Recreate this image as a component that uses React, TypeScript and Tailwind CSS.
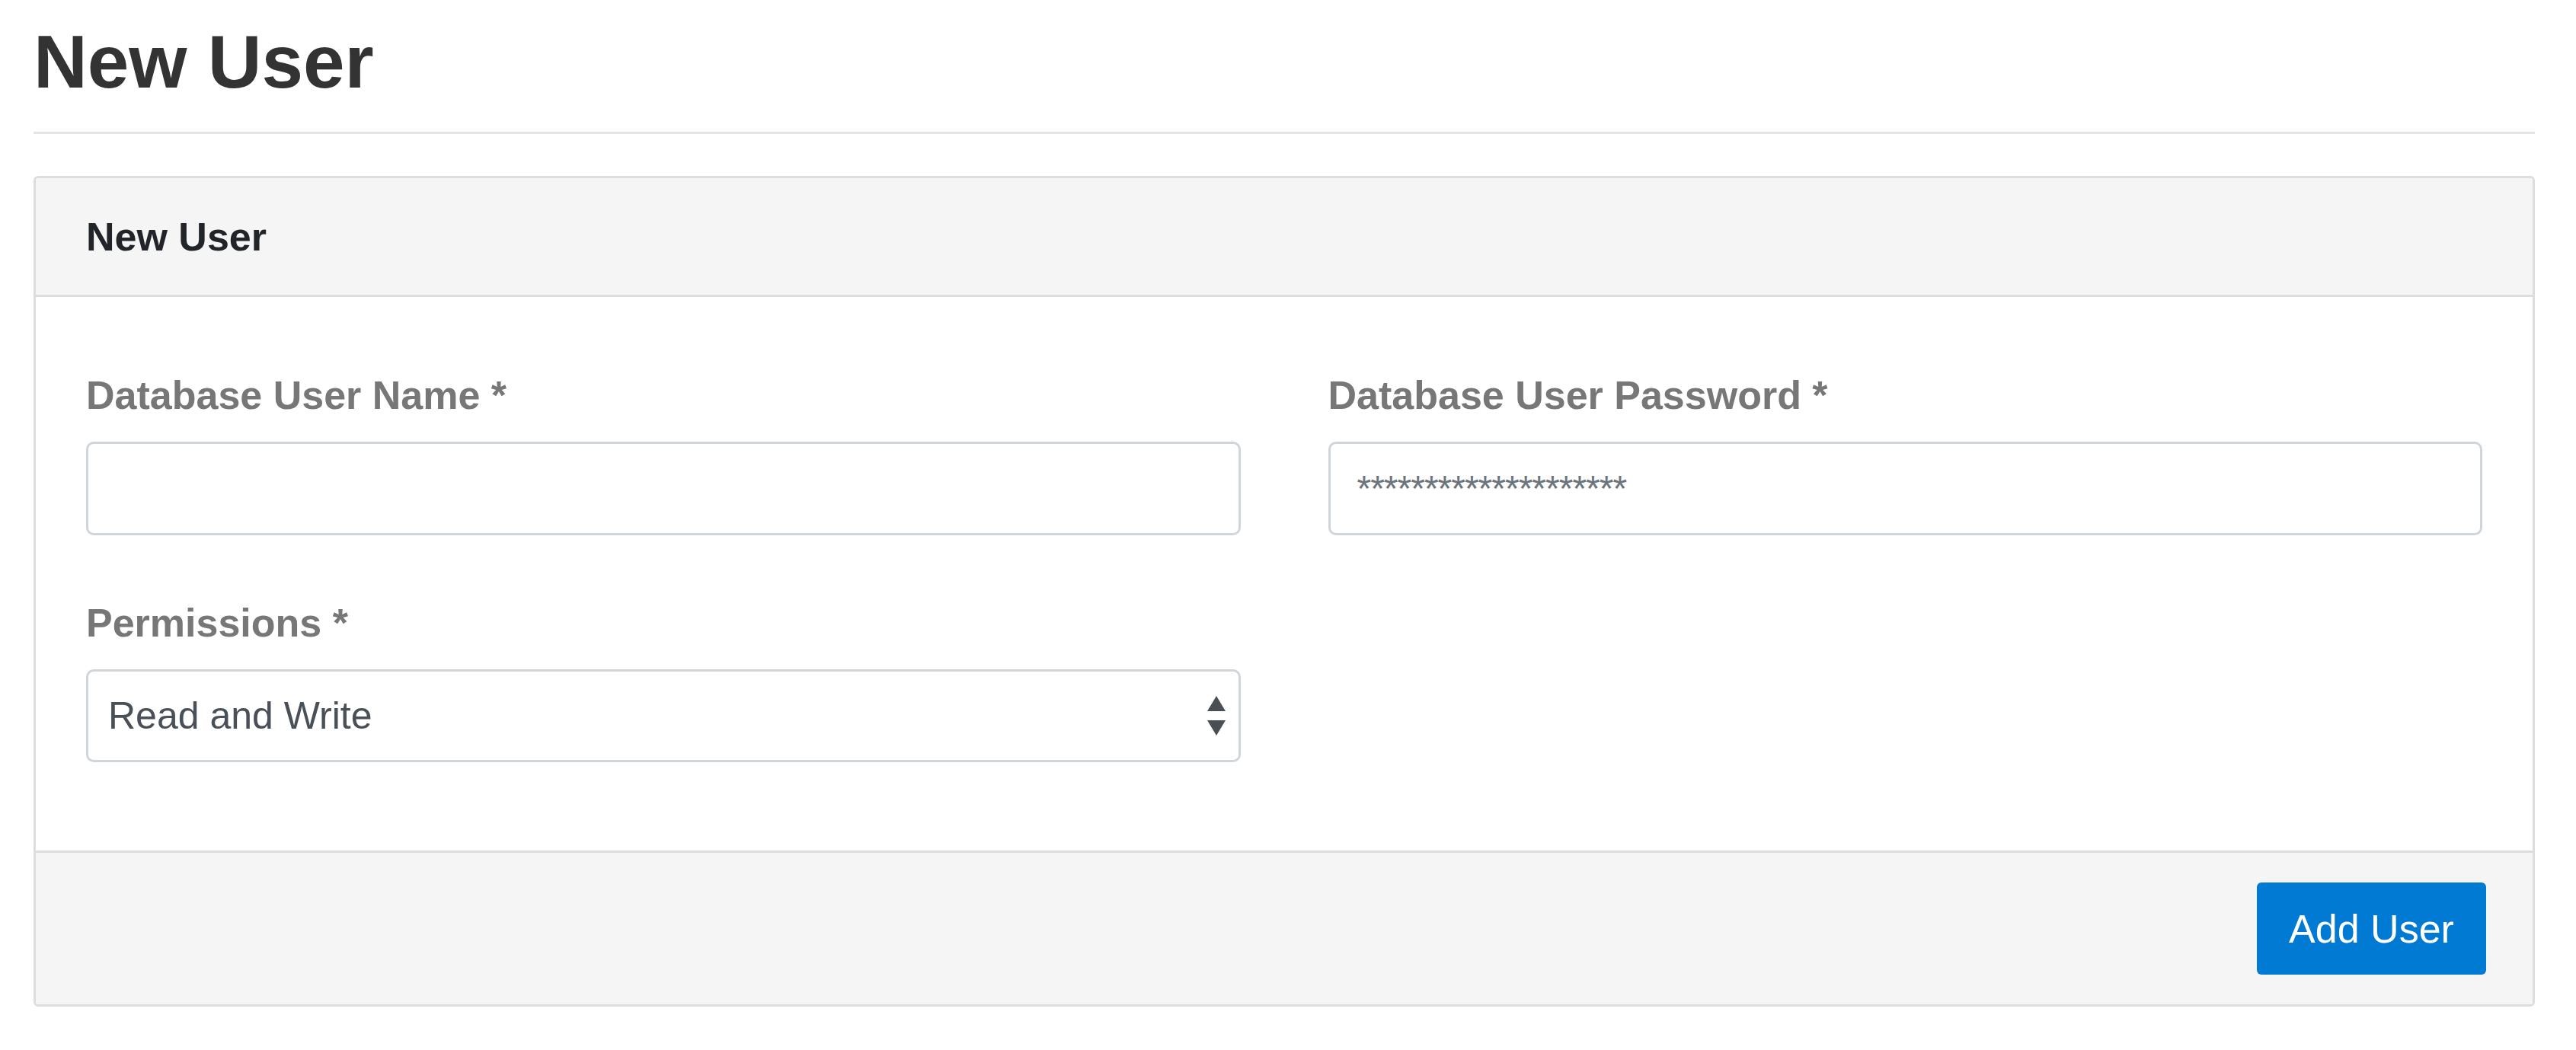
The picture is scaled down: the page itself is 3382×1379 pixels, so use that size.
import React from "react";

function Label({ children }: { children: React.ReactNode }) {
  return (
    <label className="block text-[52px] leading-[60px] font-bold text-[#777777]">
      {children}
    </label>
  );
}

export default function App() {
  return (
    <div className="min-h-screen bg-white pl-[44px] pr-[54px] pt-[28px] font-['Liberation_Sans',Arial,Helvetica,sans-serif]">
      <div className="border-b-[3px] border-[#e5e5e5] pb-[39px]">
        <h1 className="text-[98px] leading-[106px] font-bold text-[#333333]">New User</h1>
      </div>

      <div className="mt-[55px] overflow-hidden rounded-[6px] border-[3px] border-[#dddddd]">
        <div className="flex h-[156px] items-center border-b-[3px] border-[#dddddd] bg-[#f5f5f5] px-[66px]">
          <h3 className="text-[52px] leading-[60px] font-bold text-[#212529]">New User</h3>
        </div>

        <div className="bg-white px-[66px] pt-[99px] pb-[116px]">
          <div className="grid grid-cols-2 gap-x-[115px] gap-y-[85px]">
            <div>
              <Label>Database User Name *</Label>
              <input
                type="text"
                className="mt-[31px] block h-[123px] w-full rounded-[10px] border-[3px] border-[#d0d5da] bg-white px-[35px] text-[50px] text-[#495057] outline-none"
              />
            </div>
            <div>
              <Label>Database User Password *</Label>
              <input
                type="text"
                placeholder="********************"
                className="mt-[31px] block h-[123px] w-full rounded-[10px] border-[3px] border-[#d0d5da] bg-white px-[35px] text-[48px] tracking-[-1px] text-[#495057] outline-none placeholder:text-[#6c757d]"
              />
            </div>
            <div>
              <Label>Permissions *</Label>
              <div className="relative mt-[31px] h-[122px] w-full rounded-[10px] border-[3px] border-[#d0d5da] bg-white">
                <select
                  defaultValue="rw"
                  className="h-full w-full appearance-none rounded-[10px] bg-transparent pl-[26px] pr-[70px] text-[50px] text-[#495057] outline-none"
                >
                  <option value="rw">Read and Write</option>
                  <option value="r">Read Only</option>
                </select>
                <svg
                  className="pointer-events-none absolute right-[17px] top-1/2 -translate-y-1/2"
                  width="24"
                  height="52"
                  viewBox="0 0 24 52"
                >
                  <polygon points="12,0 24,20 0,20" fill="#4a4f55" />
                  <polygon points="0,32 24,32 12,52" fill="#4a4f55" />
                </svg>
              </div>
            </div>
          </div>
        </div>

        <div className="flex justify-end border-t-[3px] border-[#dddddd] bg-[#f5f5f5] pt-[39px] pb-[39px] pr-[61px]">
          <button className="h-[121px] w-[301px] rounded-[6px] bg-[#007ad2] text-[52px] text-white">
            Add User
          </button>
        </div>
      </div>
    </div>
  );
}
